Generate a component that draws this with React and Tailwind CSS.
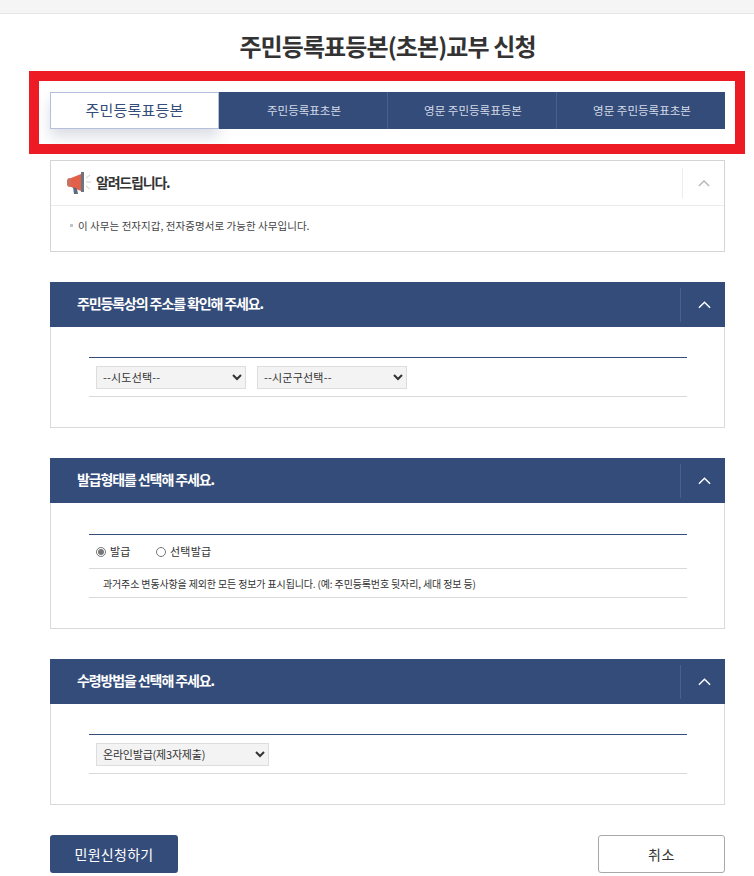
import React from "react";

const FONT = "font-['Noto_Sans_CJK_KR','Noto_Sans',sans-serif]";

function Chevron({ className }) {
  return (
    <svg viewBox="0 0 14 8" className={className} fill="none" stroke="currentColor" strokeWidth="1.6">
      <path d="M1 7 L7 1 L13 7" />
    </svg>
  );
}

function Megaphone() {
  return (
    <svg viewBox="0 0 26 24" className="w-[26px] h-[24px]">
      <rect x="1" y="7" width="6" height="9" rx="3" fill="#c9705f" />
      <path d="M5 7 L15 3 L15 20 L5 16 Z" fill="#e2604a" />
      <path d="M15 1 L18 1 L18 21 L15 21 Z" fill="#6d7480" />
      <path d="M7 16 L11 17.5 L12 23 L8 23 Z" fill="#5b6b80" />
      <path d="M20 11 H25 M20 7 L24 4 M20 15 L24 18" stroke="#c9ccd2" strokeWidth="1" fill="none" />
    </svg>
  );
}

function Section({ title, bodyTop = "pt-[30px]", children }) {
  return (
    <section className="ml-[50px] mr-[29px] mt-[30px] border border-t-0 border-[#d9d9d9]">
      <div className="-mx-px h-[45px] bg-[#344c79] flex items-center justify-between">
        <h2 className="pl-[27px] pb-[2px] text-[14px] font-bold tracking-[-1.12px] text-white">{title}</h2>
        <div className="flex items-center h-[34px] border-l border-[#4a6190] w-[45px] justify-center pl-[3px]">
          <Chevron className="w-[13px] h-[8px] text-white" />
        </div>
      </div>
      <div className={`pl-[38px] pr-[37px] ${bodyTop} pb-[30px]`}>{children}</div>
    </section>
  );
}

function Sel({ width, children }) {
  return (
    <select className={`${width} h-[23px] bg-[#f3f3f3] border border-[#dddddd] text-[11px] text-[#333] pl-[2px] tracking-[0.2px]`}>
      {children}
    </select>
  );
}

function Row({ className = "", children }) {
  return <div className={`border-b border-[#d9d9d9] flex items-center px-[7px] ${className}`}>{children}</div>;
}

export default function App() {
  return (
    <div className={`${FONT} w-[754px] h-[876px] overflow-hidden bg-white text-[#333]`}>
      <div className="h-[14px] bg-[#f6f5f5] border-b border-[#e6e6e6]" />
      <h1 className="mt-[14px] h-[36px] leading-[36px] text-center text-[24px] font-bold tracking-[-0.9px] text-[#333] pl-[21px]">
        주민등록표등본(초본)교부 신청
      </h1>
      <div className="ml-[29px] mt-[7px] w-[716px] h-[83px] border-[10px] border-[#ed1c24] pt-[11px] pl-[11px]">
        <div className="w-[675px] h-[37px] flex">
          <div className="w-[169px] h-[37px] bg-white border border-[#b4bedd] shadow-[0_8px_14px_rgba(60,70,110,0.18)] flex items-center justify-center text-[15px] tracking-[0.2px] text-[#344c79]">
            주민등록표등본
          </div>
          {["주민등록표초본", "영문 주민등록표등본", "영문 주민등록표초본"].map((t, i) => (
            <div
              key={t}
              className={`flex-1 bg-[#344c79] flex items-center justify-center pl-[2px] text-[11.5px] text-[#d5dbe8] ${i > 0 ? "border-l border-[#4a6190]" : ""}`}
            >
              {t}
            </div>
          ))}
        </div>
      </div>

      <section className="ml-[50px] mr-[29px] mt-[6px] h-[92px] border border-[#d4d4d4]">
        <div className="h-[45px] border-b border-[#ececec] flex items-center justify-between">
          <div className="flex items-center pl-[15px] gap-[4px]">
            <Megaphone />
            <strong className="pb-[2px] text-[14px] font-bold tracking-[-1.2px] text-[#333]">알려드립니다.</strong>
          </div>
          <div className="flex items-center justify-center h-[30px] w-[42px] border-l border-[#ececec]">
            <Chevron className="w-[12px] h-[7px] text-[#b5b5b5]" />
          </div>
        </div>
        <p className="pl-[19px] pt-[12px] text-[10.5px] tracking-[0.05px] text-[#444] flex items-center gap-[5px]">
          <span className="w-[3px] h-[3px] bg-[#c4c4c4]" />
          이 사무는 전자지갑, 전자증명서로 가능한 사무입니다.
        </p>
      </section>

      <Section title="주민등록상의 주소를 확인해 주세요.">
        <div className="border-t border-[#344c79]">
          <Row className="h-[39px] gap-[11px]">
            <Sel width="w-[150px]"><option>--시도선택--</option></Sel>
            <Sel width="w-[150px]"><option>--시군구선택--</option></Sel>
          </Row>
        </div>
      </Section>

      <Section title="발급형태를 선택해 주세요." bodyTop="pt-[31px]">
        <div className="border-t border-[#344c79]">
          <Row className="h-[34px] text-[11px] tracking-[0.2px]">
            <label className="flex items-center gap-[4px] w-[60px]">
              <input type="radio" name="t" defaultChecked className="w-[10px] h-[10px] m-0 accent-[#777]" />
              발급
            </label>
            <label className="flex items-center gap-[4px]">
              <input type="radio" name="t" className="w-[10px] h-[10px] m-0" />
              선택발급
            </label>
          </Row>
          <Row className="h-[29px] text-[10px] tracking-[-0.14px] pl-[14px]">
            과거주소 변동사항을 제외한 모든 정보가 표시됩니다. (예: 주민등록번호 뒷자리, 세대 정보 등)
          </Row>
        </div>
      </Section>

      <Section title="수령방법을 선택해 주세요.">
        <div className="border-t border-[#344c79]">
          <Row className="h-[39px]">
            <select className="w-[173px] h-[23px] bg-[#f3f3f3] border border-[#dddddd] text-[11px] text-[#333] pl-[2px] tracking-[-0.2px]">
              <option>온라인발급(제3자제출)</option>
            </select>
          </Row>
        </div>
      </Section>

      <div className="ml-[50px] mr-[29px] mt-[30px] flex justify-between">
        <button className="w-[128px] h-[38px] rounded-[3px] bg-[#344c79] text-white text-[14px] tracking-[0.3px]">민원신청하기</button>
        <button className="w-[127px] h-[38px] rounded-[3px] bg-white border border-[#a8a8a8] text-[#333] text-[14px] tracking-[0.5px]">취소</button>
      </div>
    </div>
  );
}
